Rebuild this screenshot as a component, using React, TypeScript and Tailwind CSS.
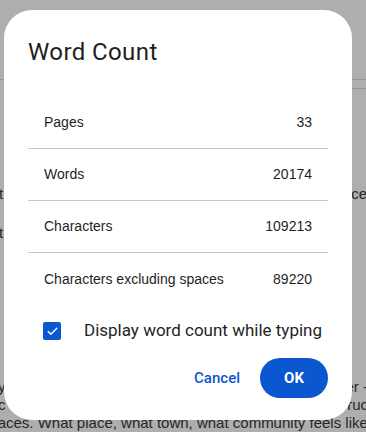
import { Check } from "lucide-react";

const rows = [
  { label: "Pages", value: "33" },
  { label: "Words", value: "20174" },
  { label: "Characters", value: "109213" },
  { label: "Characters excluding spaces", value: "89220" },
];

export default function App() {
  return (
    <div className="relative w-[366px] h-[432px] overflow-hidden bg-[#aeaeae] font-['Roboto',sans-serif]">
      {/* document behind the scrim */}
      <div className="h-[80px] border-b border-[#939393]" />
      <div className="ml-auto w-[40px] h-[9px] border-b border-[#939393]" />
      <div className="font-['Liberation_Sans',Arial,sans-serif] text-[15px] leading-[18px] text-[#262626]">
        <div className="mt-[96px] flex justify-between">
          <span className="-ml-[1px]">t</span>
          <span className="-mr-[1px]">ce</span>
        </div>
        <div className="mt-[21px] flex justify-between">
          <span className="-ml-[1px]">t</span>
        </div>
        <div className="mt-[136px] flex justify-between">
          <span className="-ml-[2px]">y</span>
          <span className="-mr-[2px]">er -</span>
        </div>
        <div className="flex justify-between">
          <span className="-ml-[2px]">c</span>
          <span className="-mr-[2px]">ruc</span>
        </div>
        <div className="whitespace-nowrap -ml-[14px]">
          places. What place, what town, what community feels like home
        </div>
      </div>

      {/* dialog */}
      <div className="absolute left-[4px] top-[10px] w-[348px] h-[410px] rounded-[28px] bg-white pt-[26px] pb-[22px]">
        <h2 className="pl-[24px] text-[24px] leading-[32px] tracking-[0.4px] text-[#1f1f1f] font-normal">Word Count</h2>

        <div className="mx-[24px] mt-[29px] font-['Liberation_Sans',Arial,sans-serif]">
          {rows.map((row, i) => (
            <div
              key={row.label}
              className={`h-[52px] px-4 flex items-center justify-between text-[14px] text-[#1f1f1f] ${
                i < rows.length - 1 ? "border-b border-[#c7c7c7]" : ""
              }`}
            >
              <span>{row.label}</span>
              <span>{row.value}</span>
            </div>
          ))}
        </div>

        <label className="mt-[6px] h-[40px] pl-[39px] flex items-center">
          <span className="w-[18px] h-[18px] rounded-[2px] bg-[#0b57d0] flex items-center justify-center">
            <Check size={13} strokeWidth={2.5} color="white" />
          </span>
          <span className="ml-[23px] text-[17px] text-[#1f1f1f]">Display word count while typing</span>
        </label>

        <div className="mt-[7px] pr-[24px] flex justify-end items-center gap-2">
          <button className="h-[40px] px-3 rounded-full text-[15px] font-medium text-[#0b57d0]">Cancel</button>
          <button className="h-[40px] w-[68px] rounded-full bg-[#0b57d0] text-[15px] font-bold text-white">OK</button>
        </div>
      </div>
    </div>
  );
}
